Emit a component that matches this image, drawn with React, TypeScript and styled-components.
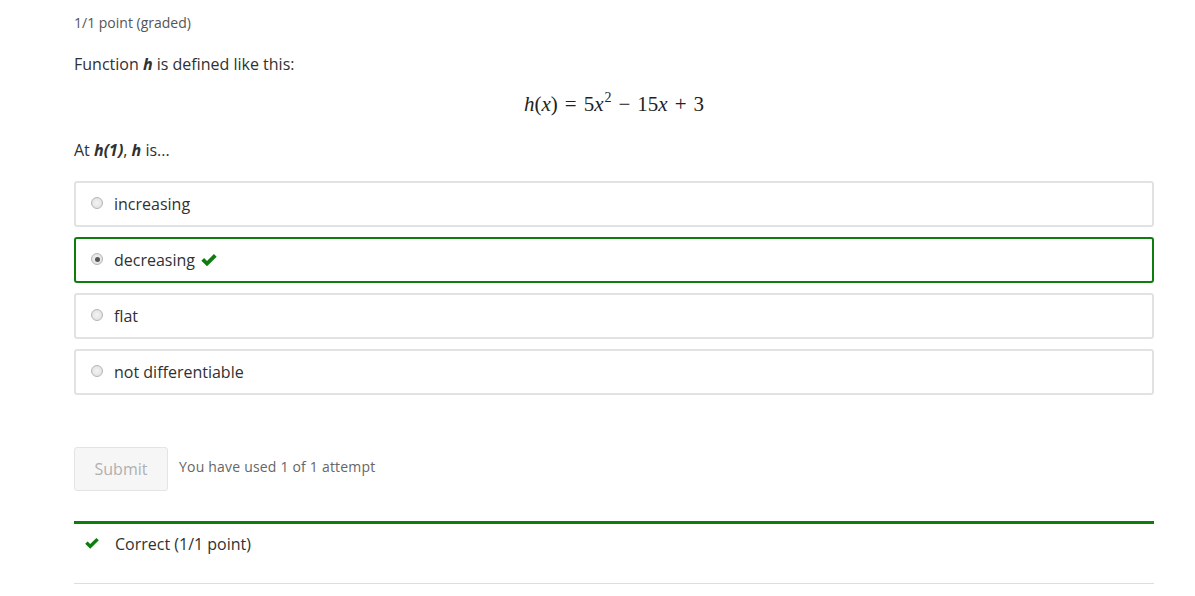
import React from "react";
import styled, { createGlobalStyle } from "styled-components";

const Global = createGlobalStyle`
  html, body { margin: 0; padding: 0; background: #fff; }
  body { font-family: "Open Sans", "Noto Sans", sans-serif; color: #313131; }
`;

const Page = styled.div`
  width: 1080px;
  margin-left: 74px;
  padding-top: 13px;
`;

const Meta = styled.div`
  font-size: 14px;
  color: #555;
  line-height: 20px;
`;

const Para = styled.p<{ $top: number }>`
  margin: ${(p) => p.$top}px 0 0;
  font-size: 16px;
  line-height: 24px;
  color: #313131;
`;

const MathLine = styled.div`
  text-align: center;
  margin-top: 16px;
  font-family: "Liberation Serif", "DejaVu Serif", serif;
  font-size: 21px;
  line-height: 24px;
  color: #222;
  & i { font-style: italic; }
  & sup { font-size: 14px; vertical-align: 9px; line-height: 0; margin-left: 1px; }
`;

const Op = styled.span`
  margin: 0 7px;
`;

const Options = styled.div`
  margin-top: 19px;
  display: flex;
  flex-direction: column;
  gap: 10px;
`;

const Option = styled.label<{ $ok?: boolean }>`
  box-sizing: border-box;
  height: 46px;
  display: flex;
  align-items: center;
  padding-left: 15px;
  border: 2px solid ${(p) => (p.$ok ? "#0d7e0d" : "#e2e2e2")};
  border-radius: 3px;
  font-size: 16px;
  color: #313131;
`;

const Radio = styled.span<{ $on?: boolean }>`
  width: 10px;
  height: 10px;
  border-radius: 50%;
  border: 1px solid #b5b5b5;
  background: radial-gradient(circle, #f4f4f4 0%, #dcdcdc 100%);
  margin-right: 11px;
  margin-top: -2px;
  position: relative;
  &::after {
    content: "";
    display: ${(p) => (p.$on ? "block" : "none")};
    position: absolute;
    left: 2.5px;
    top: 2.5px;
    width: 5px;
    height: 5px;
    border-radius: 50%;
    background: #555;
  }
`;

const Check = ({ size = 18, gap = 5 }: { size?: number; gap?: number }) => (
  <svg width={size} height={size * 0.8} viewBox="0 0 20 16" style={{ marginLeft: gap }}>
    <path d="M1.5 8.5 L4.5 5.5 L7.8 8.8 L15.5 1.2 L18.5 4.2 L7.8 14.8 Z" fill="#0d7e0d" />
  </svg>
);

const Actions = styled.div`
  margin-top: 52px;
  display: flex;
  align-items: center;
  gap: 11px;
`;

const Submit = styled.button`
  box-sizing: border-box;
  width: 94px;
  height: 44px;
  background: #f6f6f6;
  border: 1px solid #e4e4e4;
  border-radius: 3px;
  color: #b0b0b0;
  font-family: "Open Sans", sans-serif;
  font-size: 16px;
  padding-top: 0px;
`;

const Attempts = styled.span`
  font-size: 14px;
  letter-spacing: 0.2px;
  color: #666;
  margin-top: -6px;
`;

const Result = styled.div`
  margin-top: 30px;
  border-top: 3px solid #0d7e0d;
  border-bottom: 1px solid #ddd;
  height: 63px;
  box-sizing: border-box;
  display: flex;
  align-items: center;
  padding: 0 0 20px 10px;
  font-size: 16px;
  color: #313131;
  & > span { margin-left: 15px; }
`;

export default function App() {
  return (
    <>
      <Global />
      <Page>
        <Meta>1/1 point (graded)</Meta>
        <Para $top={19}>
          Function <b><i>h</i></b> is defined like this:
        </Para>
        <MathLine>
          <i>h</i>(<i>x</i>)<Op>=</Op>5<i>x</i><sup>2</sup><Op>−</Op>15<i>x</i><Op>+</Op>3
        </MathLine>
        <Para $top={22}>
          At <b><i>h(1)</i></b>, <b><i>h</i></b> is...
        </Para>
        <Options>
          <Option><Radio />increasing</Option>
          <Option $ok><Radio $on />decreasing<Check /></Option>
          <Option><Radio />flat</Option>
          <Option><Radio />not differentiable</Option>
        </Options>
        <Actions>
          <Submit>Submit</Submit>
          <Attempts>You have used 1 of 1 attempt</Attempts>
        </Actions>
        <Result>
          <Check size={16} gap={0} />
          <span>Correct (1/1 point)</span>
        </Result>
      </Page>
    </>
  );
}
